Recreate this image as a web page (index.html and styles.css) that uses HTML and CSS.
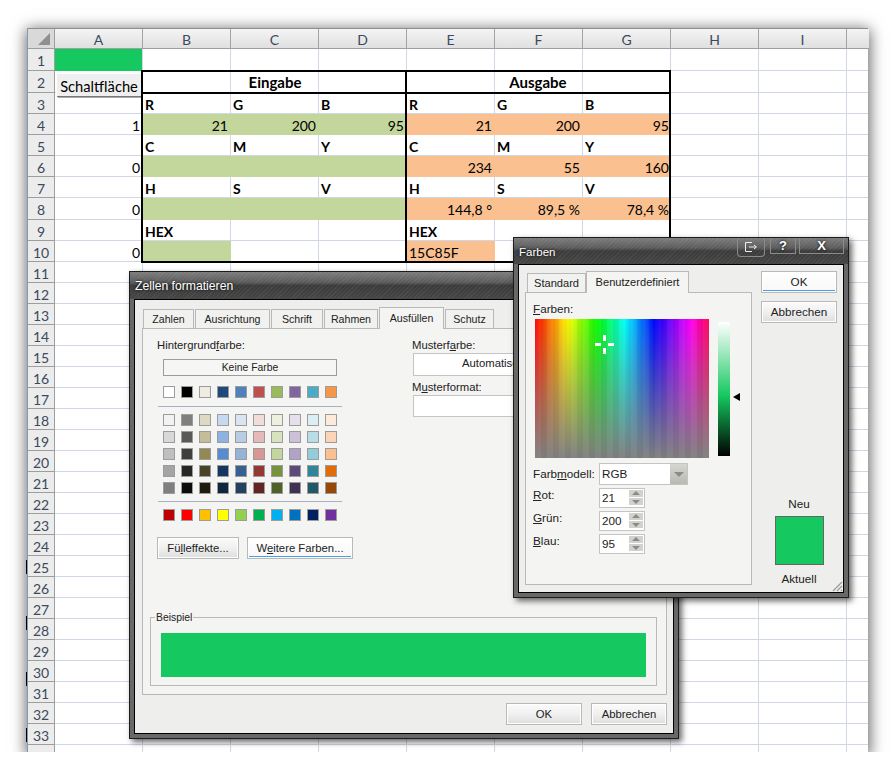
FILE: index.html
```html
<!DOCTYPE html>
<html lang="de">
<head>
  <meta charset="UTF-8">
  <title>Zellen formatieren</title>
  <link rel="stylesheet" href="styles.css">
</head>
<body>
  <div class="sheet">
    <div class="colhead">
      <div class="corner"><span class="corner-tri"></span></div>
      <div class="ch">A</div><div class="ch">B</div><div class="ch">C</div><div class="ch">D</div><div class="ch">E</div><div class="ch">F</div><div class="ch">G</div><div class="ch">H</div><div class="ch">I</div><div class="ch"></div>
    </div>
    <div class="rows">
      <div class="row tall"><div class="rh">1</div><div class="cell selected"></div></div>
      <div class="row tall">
        <div class="rh">2</div>
        <div class="cell"><div class="macro-btn">Schaltfläche</div></div>
        <div class="cell head edge-l edge-t edge-b span3">Eingabe</div>
        <div class="cell head edge-l edge-r edge-t edge-b span3">Ausgabe</div>
      </div>
      <div class="row">
        <div class="rh">3</div><div class="cell"></div>
        <div class="cell lbl edge-l">R</div><div class="cell lbl">G</div><div class="cell lbl">B</div>
        <div class="cell lbl edge-l">R</div><div class="cell lbl">G</div><div class="cell lbl edge-r">B</div>
      </div>
      <div class="row">
        <div class="rh">4</div><div class="cell num">1</div>
        <div class="cell num in edge-l">21</div><div class="cell num in">200</div><div class="cell num in">95</div>
        <div class="cell num out edge-l">21</div><div class="cell num out">200</div><div class="cell num out edge-r">95</div>
      </div>
      <div class="row">
        <div class="rh">5</div><div class="cell"></div>
        <div class="cell lbl edge-l">C</div><div class="cell lbl">M</div><div class="cell lbl">Y</div>
        <div class="cell lbl edge-l">C</div><div class="cell lbl">M</div><div class="cell lbl edge-r">Y</div>
      </div>
      <div class="row">
        <div class="rh">6</div><div class="cell num">0</div>
        <div class="cell in edge-l"></div><div class="cell in"></div><div class="cell in"></div>
        <div class="cell num out edge-l">234</div><div class="cell num out">55</div><div class="cell num out edge-r">160</div>
      </div>
      <div class="row">
        <div class="rh">7</div><div class="cell"></div>
        <div class="cell lbl edge-l">H</div><div class="cell lbl">S</div><div class="cell lbl">V</div>
        <div class="cell lbl edge-l">H</div><div class="cell lbl">S</div><div class="cell lbl edge-r">V</div>
      </div>
      <div class="row tall">
        <div class="rh">8</div><div class="cell num">0</div>
        <div class="cell in edge-l"></div><div class="cell in"></div><div class="cell in"></div>
        <div class="cell num out edge-l">144,8 °</div><div class="cell num out">89,5 %</div><div class="cell num out edge-r">78,4 %</div>
      </div>
      <div class="row">
        <div class="rh">9</div><div class="cell"></div>
        <div class="cell lbl edge-l">HEX</div><div class="cell"></div><div class="cell"></div>
        <div class="cell lbl edge-l">HEX</div><div class="cell"></div><div class="cell edge-r"></div>
      </div>
      <div class="row">
        <div class="rh">10</div><div class="cell num">0</div>
        <div class="cell in edge-l edge-b"></div><div class="cell edge-b"></div><div class="cell edge-b"></div>
        <div class="cell out text edge-l edge-b">15C85F</div><div class="cell edge-b"></div><div class="cell edge-r edge-b"></div>
      </div>
      <div class="row"><div class="rh">11</div></div>
      <div class="row"><div class="rh">12</div></div>
      <div class="row"><div class="rh">13</div></div>
      <div class="row"><div class="rh">14</div></div>
      <div class="row"><div class="rh">15</div></div>
      <div class="row"><div class="rh">16</div></div>
      <div class="row"><div class="rh">17</div></div>
      <div class="row"><div class="rh">18</div></div>
      <div class="row"><div class="rh">19</div></div>
      <div class="row"><div class="rh">20</div></div>
      <div class="row"><div class="rh">21</div></div>
      <div class="row"><div class="rh">22</div></div>
      <div class="row"><div class="rh">23</div></div>
      <div class="row"><div class="rh">24</div></div>
      <div class="row"><div class="rh">25</div></div>
      <div class="row"><div class="rh">26</div></div>
      <div class="row"><div class="rh">27</div></div>
      <div class="row"><div class="rh">28</div></div>
      <div class="row"><div class="rh">29</div></div>
      <div class="row"><div class="rh">30</div></div>
      <div class="row"><div class="rh">31</div></div>
      <div class="row"><div class="rh">32</div></div>
      <div class="row"><div class="rh">33</div></div>
      <div class="row tail"><div class="rh"></div></div>
    </div>
  </div>

  <!-- Zellen formatieren -->
  <div class="dialog format-dialog">
    <div class="titlebar">Zellen formatieren</div>
    <div class="dialog-body format-body">
      <div class="tabs">
        <div class="tab tab-zahlen">Zahlen</div>
        <div class="tab tab-ausrichtung">Ausrichtung</div>
        <div class="tab tab-schrift">Schrift</div>
        <div class="tab tab-rahmen">Rahmen</div>
        <div class="tab tab-ausfuellen active">Ausfüllen</div>
        <div class="tab tab-schutz">Schutz</div>
      </div>
      <div class="panel format-panel">
        <div class="fill-cols">
          <div class="fill-left">
            <div class="label">Hintergrund<u>f</u>arbe:</div>
            <div class="no-color">Keine Farbe</div>
            <div class="swatches first">
              <span class="sw c-ffffff"></span><span class="sw c-000000"></span><span class="sw c-eeece1"></span><span class="sw c-1f497d"></span><span class="sw c-4f81bd"></span><span class="sw c-c0504d"></span><span class="sw c-9bbb59"></span><span class="sw c-8064a2"></span><span class="sw c-4bacc6"></span><span class="sw c-f79646"></span>
            </div>
            <div class="sep"></div>
            <div class="swatches">
              <span class="sw c-f2f2f2"></span><span class="sw c-7f7f7f"></span><span class="sw c-ddd9c3"></span><span class="sw c-c6d9f0"></span><span class="sw c-dbe5f1"></span><span class="sw c-f2dcdb"></span><span class="sw c-ebf1dd"></span><span class="sw c-e5e0ec"></span><span class="sw c-dbeef3"></span><span class="sw c-fdeada"></span>
              <span class="sw c-d8d8d8"></span><span class="sw c-595959"></span><span class="sw c-c4bd97"></span><span class="sw c-8db3e2"></span><span class="sw c-b8cce4"></span><span class="sw c-e5b9b7"></span><span class="sw c-d7e3bc"></span><span class="sw c-ccc1d9"></span><span class="sw c-b7dde8"></span><span class="sw c-fbd5b5"></span>
              <span class="sw c-bfbfbf"></span><span class="sw c-3f3f3f"></span><span class="sw c-938953"></span><span class="sw c-548dd4"></span><span class="sw c-95b3d7"></span><span class="sw c-d99694"></span><span class="sw c-c3d69b"></span><span class="sw c-b2a2c7"></span><span class="sw c-92cddc"></span><span class="sw c-fac08f"></span>
              <span class="sw c-a5a5a5"></span><span class="sw c-262626"></span><span class="sw c-494429"></span><span class="sw c-17365d"></span><span class="sw c-366092"></span><span class="sw c-953734"></span><span class="sw c-76923c"></span><span class="sw c-5f497a"></span><span class="sw c-31859b"></span><span class="sw c-e36c09"></span>
              <span class="sw c-7f7f7f"></span><span class="sw c-0c0c0c"></span><span class="sw c-1d1b10"></span><span class="sw c-0f243e"></span><span class="sw c-244061"></span><span class="sw c-632423"></span><span class="sw c-4f6128"></span><span class="sw c-3f3151"></span><span class="sw c-205867"></span><span class="sw c-974806"></span>
            </div>
            <div class="sep"></div>
            <div class="swatches">
              <span class="sw c-c00000"></span><span class="sw c-ff0000"></span><span class="sw c-ffc000"></span><span class="sw c-ffff00"></span><span class="sw c-92d050"></span><span class="sw c-00b050"></span><span class="sw c-00b0f0"></span><span class="sw c-0070c0"></span><span class="sw c-002060"></span><span class="sw c-7030a0"></span>
            </div>
            <div class="fill-buttons">
              <div class="btn effects-btn">Fü<u>l</u>leffekte...</div>
              <div class="btn default more-btn">W<u>e</u>itere Farben...</div>
            </div>
          </div>
          <div class="fill-right">
            <div class="label">Musterf<u>a</u>rbe:</div>
            <div class="pattern-box auto">Automatisch</div>
            <div class="label">M<u>u</u>sterformat:</div>
            <div class="pattern-box"></div>
          </div>
        </div>
        <fieldset class="sample">
          <legend>Beispiel</legend>
          <div class="sample-fill"></div>
        </fieldset>
      </div>
      <div class="format-actions">
        <div class="btn action-btn">OK</div>
        <div class="btn action-btn">Abbrechen</div>
      </div>
    </div>
  </div>

  <!-- Farben -->
  <div class="dialog color-dialog">
    <div class="titlebar">
      Farben
      <div class="title-controls">
        <div class="ctl ctl-restore">
          <svg width="14" height="12" viewBox="0 0 14 12"><path d="M8 1.5H1.5v9H8M5 6h7M10 4l2.5 2L10 8" fill="none" stroke="#eee" stroke-width="1"/></svg>
        </div>
        <div class="ctl ctl-help">?</div>
        <div class="ctl ctl-close">X</div>
      </div>
    </div>
    <div class="dialog-body color-body">
      <div class="color-left">
        <div class="tabs">
          <div class="tab tab-standard">Standard</div>
          <div class="tab tab-custom active">Benutzerdefiniert</div>
        </div>
        <div class="panel color-panel">
          <div class="label"><u>F</u>arben:</div>
          <div class="picker">
            <div class="spectrum">
              <svg class="crosshair" width="20" height="20" viewBox="0 0 20 20" fill="#fff"><rect x="0" y="8" width="6" height="3"/><rect x="13" y="8" width="6" height="3"/><rect x="8" y="0" width="3" height="6"/><rect x="8" y="13" width="3" height="6"/></svg>
            </div>
            <div class="lum"></div>
            <div class="lum-arrow"></div>
          </div>
          <div class="model-grid">
            <div class="label">Farb<u>m</u>odell:</div>
            <div class="model-select">RGB<span class="select-arrow"></span></div>
            <div class="label"><u>R</u>ot:</div>
            <div class="spin">21<span class="spin-btns"><i class="up"></i><i class="down"></i></span></div>
            <div class="label"><u>G</u>rün:</div>
            <div class="spin">200<span class="spin-btns"><i class="up"></i><i class="down"></i></span></div>
            <div class="label"><u>B</u>lau:</div>
            <div class="spin">95<span class="spin-btns"><i class="up"></i><i class="down"></i></span></div>
          </div>
        </div>
      </div>
      <div class="color-right">
        <div class="btn default side-btn">OK</div>
        <div class="btn side-btn">Abbrechen</div>
        <div class="compare">
          <div>Neu</div>
          <div class="compare-swatch"></div>
          <div>Aktuell</div>
        </div>
      </div>
      <svg class="grip" width="12" height="12" viewBox="0 0 12 12" stroke="#9a9a9a" stroke-width="1.2"><path d="M11 2 2 11M11 6l-5 5M11 10l-1 1"/></svg>
    </div>
  </div>
</body>
</html>
```

FILE: styles.css
```css
/* Basic styling */
body {
  margin: 0;
  padding: 28px 0 0 28px;
  background: #fff;
  font-family: "Liberation Sans", sans-serif;
  font-size: 11.3px;
  color: #222;
}

/* Worksheet */
.sheet {
  position: relative;
  width: 840px;
  height: 724px;
  background: #fff;
  box-shadow: 0 3px 14px 2px rgba(0, 0, 0, .6);
  font-family: Lato, sans-serif;
  font-size: 14px;
  color: #000;
}
.sheet::before {
  content: "";
  position: absolute;
  left: -2px;
  top: 532px;
  width: 2px;
  height: 182px;
  background: repeating-linear-gradient(#000 0 14px, transparent 14px 56px);
}
.sheet::after {
  content: "";
  position: absolute;
  left: -1px;
  top: 0;
  width: 1px;
  height: 100%;
  background: #7f9db9;
}
.colhead, .row {
  display: grid;
  grid-template-columns: 27px repeat(9, 88px) 22px;
  grid-template-rows: minmax(0, 1fr);
}
.colhead {
  height: 21px;
  box-sizing: border-box;
  border-top: 1px solid #8f8f8f;
}
.corner {
  position: relative;
  background: #d9d9d9;
  border-right: 1px solid #9e9e9e;
  border-bottom: 1px solid #9e9e9e;
}
.corner-tri {
  position: absolute;
  right: 4px;
  bottom: 3px;
  border-left: 12px solid transparent;
  border-bottom: 12px solid #8f8f8f;
}
.ch {
  background: linear-gradient(#f4f4f4, #e0e0e0);
  border-right: 1px solid #a3a3a3;
  border-bottom: 1px solid #9e9e9e;
  text-align: center;
  line-height: 22px;
  color: #3b4a5c;
}
.ch:last-child {
  border-right: none;
}
.rows {
  background: linear-gradient(to right, transparent 87px, #d0d7e5 87px) 27px 0 / 88px 100%;
}
.row {
  height: 21px;
  background: linear-gradient(#d0d7e5, #d0d7e5) bottom / 100% 1px no-repeat;
}
.row.tall {
  height: 22px;
}
.row.tail {
  height: 7px;
  background: none;
}
.rh {
  background: #ececec;
  border-right: 1px solid #9e9e9e;
  border-bottom: 1px solid #9e9e9e;
  text-align: center;
  line-height: 23px;
  color: #3b4a5c;
  overflow: hidden;
}
.tail .rh {
  border-bottom: none;
}
.cell {
  min-width: 0;
  white-space: nowrap;
  line-height: 24px;
}
.selected {
  background: #15c85f;
  margin-right: 1px;
}
.span3 {
  grid-column: span 3;
}
.head {
  text-align: center;
  font-weight: bold;
  font-size: 15px;
}
.lbl {
  font-weight: bold;
  padding-left: 2px;
}
.num {
  text-align: right;
  padding-right: 3px;
}
.text {
  padding-left: 2px;
}
.in {
  background: #c3d69b;
}
.out {
  background: #fac090;
}
.edge-l {
  border-left: 2px solid #000;
  margin-left: -2px;
}
.edge-r {
  border-right: 2px solid #000;
}
.edge-r.num {
  padding-right: 0;
}
.edge-t {
  border-top: 2px solid #000;
  margin-top: -1px;
  line-height: 21px;
}
.edge-b {
  border-bottom: 2px solid #000;
  margin-bottom: -1px;
}
.macro-btn {
  box-sizing: border-box;
  width: 85px;
  height: 23px;
  margin: 2px 0 -4px 1px;
  background: #efefef;
  border-top: 1px solid #fff;
  border-left: 1px solid #fff;
  box-shadow: 1px 1px 0 #777, 2px 2px 0 #aaa;
  text-align: center;
  font-size: 14.7px;
  line-height: 24px;
}

/* Dialog windows */
.dialog {
  position: absolute;
  box-sizing: border-box;
  display: flex;
  flex-direction: column;
  padding: 0 4px 4px;
  background: #686868;
  border: 1px solid #1c1c1c;
  box-shadow: 3px 3px 6px rgba(0, 0, 0, .6);
}
.format-dialog {
  left: 129px;
  top: 271px;
  width: 550px;
  height: 468px;
}
.color-dialog {
  left: 513px;
  top: 237px;
  width: 336px;
  height: 361px;
}
.titlebar {
  position: relative;
  flex: none;
  height: 27px;
  margin: 0 -4px;
  padding-left: 5px;
  background:
    repeating-linear-gradient(135deg, rgba(255, 255, 255, .05) 0 1px, transparent 1px 3px),
    linear-gradient(#7d7d7d, #5c5c5c 38%, #3b3b3b 50%, #464646);
  color: #fff;
  font-size: 12.2px;
  line-height: 28px;
  text-shadow: 0 0 3px #000;
}
.color-dialog .titlebar {
  height: 26px;
  font-size: 11.5px;
}
.title-controls {
  position: absolute;
  right: 4px;
  top: 0;
  display: flex;
  align-items: flex-start;
  gap: 3px;
}
.ctl {
  box-sizing: border-box;
  display: flex;
  align-items: center;
  justify-content: center;
  height: 16px;
  border: 1px solid #8a8a8a;
  border-top: none;
  color: #fff;
  font-weight: bold;
  font-size: 13px;
  line-height: 14px;
}
.ctl-restore {
  width: 28px;
  height: 19px;
  margin-right: 2px;
  border-radius: 0 0 4px 4px;
}
.ctl-help {
  width: 26px;
}
.ctl-close {
  width: 45px;
}
.dialog-body {
  position: relative;
  flex: 1;
  min-height: 0;
  box-sizing: border-box;
  border: 1px solid #000;
  background: #eeeeec;
}
.format-body {
  display: flex;
  flex-direction: column;
  padding: 7px 6px 0 7px;
}
.color-body {
  display: flex;
  gap: 9px;
  padding: 6px 6px 7px 6px;
  font-size: 11.7px;
}

/* Tabs */
.tabs {
  display: flex;
  gap: 1px;
  height: 21px;
  margin-left: 1px;
  position: relative;
  z-index: 1;
}
.tab {
  box-sizing: border-box;
  flex: none;
  margin-top: 2px;
  height: 19px;
  background: #f1f1ef;
  border: 1px solid #b9b9b9;
  border-bottom: none;
  text-align: center;
  font-size: 10.6px;
  line-height: 19px;
  color: #222;
}
.tab-zahlen { width: 51px; }
.tab-ausrichtung { width: 75px; }
.tab-schrift { width: 52px; }
.tab-rahmen { width: 54px; }
.tab-ausfuellen { width: 65px; }
.tab-schutz { width: 49px; }
.color-body .tabs {
  gap: 0;
  margin-left: 2px;
}
.color-body .tab {
  font-size: 11.1px;
}
.tab-standard { width: 59px; }
.tab-custom { width: 103px; }
.tab.active {
  margin-top: 0;
  height: 22px;
  background: #f4f4f2;
  line-height: 20px;
}
.panel {
  box-sizing: border-box;
  background: #f4f4f2;
  border: 1px solid #b9b9b9;
}
.format-panel {
  display: flex;
  flex-direction: column;
  height: 367px;
  padding: 9px 9px 8px 7px;
}
.label {
  line-height: 14px;
}

/* Ausfüllen tab */
.fill-cols {
  display: flex;
}
.fill-left {
  flex: none;
  width: 262px;
  padding-left: 7px;
  box-sizing: border-box;
}
.fill-right {
  flex: 1;
  min-width: 0;
}
.no-color {
  box-sizing: border-box;
  width: 174px;
  height: 17px;
  margin: 7px 0 10px 6px;
  border: 1px solid #9c9c9c;
  text-align: center;
  font-size: 10.4px;
  line-height: 16px;
  background: #f6f6f4;
}
.swatches {
  display: grid;
  grid-template-columns: repeat(10, 12px);
  column-gap: 6px;
  row-gap: 5px;
  margin-left: 6px;
}
.sw {
  box-sizing: border-box;
  height: 12px;
  border: 1px solid #9c9c9c;
}
.sep {
  width: 184px;
  height: 1px;
  margin: 7px 0 7px 1px;
  background: #a9afc0;
}
.swatches.first + .sep {
  margin: 8px 0 7px 1px;
}
.fill-buttons {
  display: flex;
  gap: 8px;
  margin-top: 16px;
}
.pattern-box {
  box-sizing: border-box;
  width: 246px;
  height: 22px;
  margin: 1px 0 4px 1px;
  background: #fff;
  border: 1px solid #c4c4c4;
}
.pattern-box.auto {
  height: 23px;
  padding-left: 48px;
  line-height: 19px;
}
.sample {
  margin: auto 0 0 0;
  padding: 9px 10px 8px 10px;
  border: 1px solid #b9b9b9;
}
.sample legend {
  padding: 0 1px;
  margin-left: -6px;
  font-size: 10.4px;
  line-height: 13px;
}
.sample-fill {
  height: 44px;
  background: #15c85f;
}

/* Buttons */
.btn {
  box-sizing: border-box;
  height: 22px;
  background: linear-gradient(#fbfbfb, #f0f0f0 50%, #dedede);
  border: 1px solid #b9b9b9;
  box-shadow: inset 0 0 0 1px #fff;
  text-align: center;
  line-height: 20px;
  color: #222;
}
.btn.default {
  background: linear-gradient(#fff, #f7f7f7);
  box-shadow: inset 0 0 0 1px #fff, inset 0 -1px 0 1px #4a9fe0;
}
.effects-btn {
  width: 82px;
}
.more-btn {
  width: 106px;
}
.format-actions {
  display: flex;
  justify-content: flex-end;
  gap: 9px;
  margin-top: 8px;
}
.action-btn {
  width: 76px;
}

/* Farben dialog */
.color-left {
  flex: none;
  width: 227px;
  display: flex;
  flex-direction: column;
}
.color-panel {
  flex: 1;
  padding: 9px 7px 0 7px;
}
.picker {
  display: flex;
  align-items: flex-start;
  margin: 3px 0 0 2px;
}
.spectrum {
  position: relative;
  flex: none;
  width: 174px;
  height: 139px;
  background:
    repeating-linear-gradient(90deg, rgba(255, 255, 255, .03) 0 6px, rgba(0, 0, 0, .03) 6px 12px),
    linear-gradient(to bottom, rgba(128, 128, 128, 0), #808080),
    linear-gradient(to right, #f00, #ff0 19%, #0f0 36%, #0ff 52%, #00f 69%, #f0f 89%, #f05);
}
.crosshair {
  position: absolute;
  left: 60px;
  top: 16px;
}
.lum {
  flex: none;
  width: 12px;
  height: 134px;
  margin: 3px 0 0 9px;
  background: linear-gradient(#fff, #15c85f 55%, #000);
}
.lum-arrow {
  margin: 74px 0 0 3px;
  border-top: 4px solid transparent;
  border-bottom: 4px solid transparent;
  border-right: 7px solid #000;
}
.model-grid {
  display: grid;
  grid-template-columns: 66px auto;
  justify-content: start;
  row-gap: 3px;
  margin-top: 5px;
}
.model-grid .label {
  line-height: 14px;
}
.model-grid .label:first-child {
  line-height: 22px;
}
.model-select {
  position: relative;
  box-sizing: border-box;
  width: 89px;
  height: 22px;
  padding-left: 2px;
  background: #fff;
  border: 1px solid #c4c4c4;
  line-height: 20px;
}
.select-arrow {
  position: absolute;
  right: 0;
  top: 0;
  width: 17px;
  height: 20px;
  background: linear-gradient(#d6d6d0, #b9b9b3);
}
.select-arrow::after {
  content: "";
  position: absolute;
  left: 4px;
  top: 8px;
  border-left: 5px solid transparent;
  border-right: 5px solid transparent;
  border-top: 5px solid #8b8b8b;
}
.spin {
  position: relative;
  box-sizing: border-box;
  width: 46px;
  height: 20px;
  padding-left: 2px;
  background: #fff;
  border: 1px solid #c4c4c4;
  line-height: 18px;
}
.spin-btns {
  position: absolute;
  right: 1px;
  top: 1px;
  display: flex;
  flex-direction: column;
  gap: 1px;
  width: 14px;
}
.spin-btns i {
  position: relative;
  display: block;
  height: 7px;
  background: #d2d2cc;
}
.spin-btns i::after {
  content: "";
  position: absolute;
  left: 3px;
  border-left: 4px solid transparent;
  border-right: 4px solid transparent;
}
.spin-btns .up::after {
  top: 1px;
  border-bottom: 4px solid #8b8b8b;
}
.spin-btns .down::after {
  top: 2px;
  border-top: 4px solid #8b8b8b;
}
.color-right {
  flex: 1;
  display: flex;
  flex-direction: column;
  gap: 8px;
}
.side-btn {
  width: 76px;
}
.compare {
  margin-top: auto;
  width: 76px;
  display: flex;
  flex-direction: column;
  align-items: center;
  gap: 7px;
}
.compare-swatch {
  box-sizing: border-box;
  width: 49px;
  height: 49px;
  margin-top: -1px;
  background: #15c85f;
  border: 1px solid #666;
}
.grip {
  position: absolute;
  right: 0;
  bottom: 0;
}

/* Palette */
.c-ffffff { background: #ffffff; }
.c-000000 { background: #000000; }
.c-eeece1 { background: #eeece1; }
.c-1f497d { background: #1f497d; }
.c-4f81bd { background: #4f81bd; }
.c-c0504d { background: #c0504d; }
.c-9bbb59 { background: #9bbb59; }
.c-8064a2 { background: #8064a2; }
.c-4bacc6 { background: #4bacc6; }
.c-f79646 { background: #f79646; }
.c-f2f2f2 { background: #f2f2f2; }
.c-7f7f7f { background: #7f7f7f; }
.c-ddd9c3 { background: #ddd9c3; }
.c-c6d9f0 { background: #c6d9f0; }
.c-dbe5f1 { background: #dbe5f1; }
.c-f2dcdb { background: #f2dcdb; }
.c-ebf1dd { background: #ebf1dd; }
.c-e5e0ec { background: #e5e0ec; }
.c-dbeef3 { background: #dbeef3; }
.c-fdeada { background: #fdeada; }
.c-d8d8d8 { background: #d8d8d8; }
.c-595959 { background: #595959; }
.c-c4bd97 { background: #c4bd97; }
.c-8db3e2 { background: #8db3e2; }
.c-b8cce4 { background: #b8cce4; }
.c-e5b9b7 { background: #e5b9b7; }
.c-d7e3bc { background: #d7e3bc; }
.c-ccc1d9 { background: #ccc1d9; }
.c-b7dde8 { background: #b7dde8; }
.c-fbd5b5 { background: #fbd5b5; }
.c-bfbfbf { background: #bfbfbf; }
.c-3f3f3f { background: #3f3f3f; }
.c-938953 { background: #938953; }
.c-548dd4 { background: #548dd4; }
.c-95b3d7 { background: #95b3d7; }
.c-d99694 { background: #d99694; }
.c-c3d69b { background: #c3d69b; }
.c-b2a2c7 { background: #b2a2c7; }
.c-92cddc { background: #92cddc; }
.c-fac08f { background: #fac08f; }
.c-a5a5a5 { background: #a5a5a5; }
.c-262626 { background: #262626; }
.c-494429 { background: #494429; }
.c-17365d { background: #17365d; }
.c-366092 { background: #366092; }
.c-953734 { background: #953734; }
.c-76923c { background: #76923c; }
.c-5f497a { background: #5f497a; }
.c-31859b { background: #31859b; }
.c-e36c09 { background: #e36c09; }
.c-0c0c0c { background: #0c0c0c; }
.c-1d1b10 { background: #1d1b10; }
.c-0f243e { background: #0f243e; }
.c-244061 { background: #244061; }
.c-632423 { background: #632423; }
.c-4f6128 { background: #4f6128; }
.c-3f3151 { background: #3f3151; }
.c-205867 { background: #205867; }
.c-974806 { background: #974806; }
.c-c00000 { background: #c00000; }
.c-ff0000 { background: #ff0000; }
.c-ffc000 { background: #ffc000; }
.c-ffff00 { background: #ffff00; }
.c-92d050 { background: #92d050; }
.c-00b050 { background: #00b050; }
.c-00b0f0 { background: #00b0f0; }
.c-0070c0 { background: #0070c0; }
.c-002060 { background: #002060; }
.c-7030a0 { background: #7030a0; }
```
